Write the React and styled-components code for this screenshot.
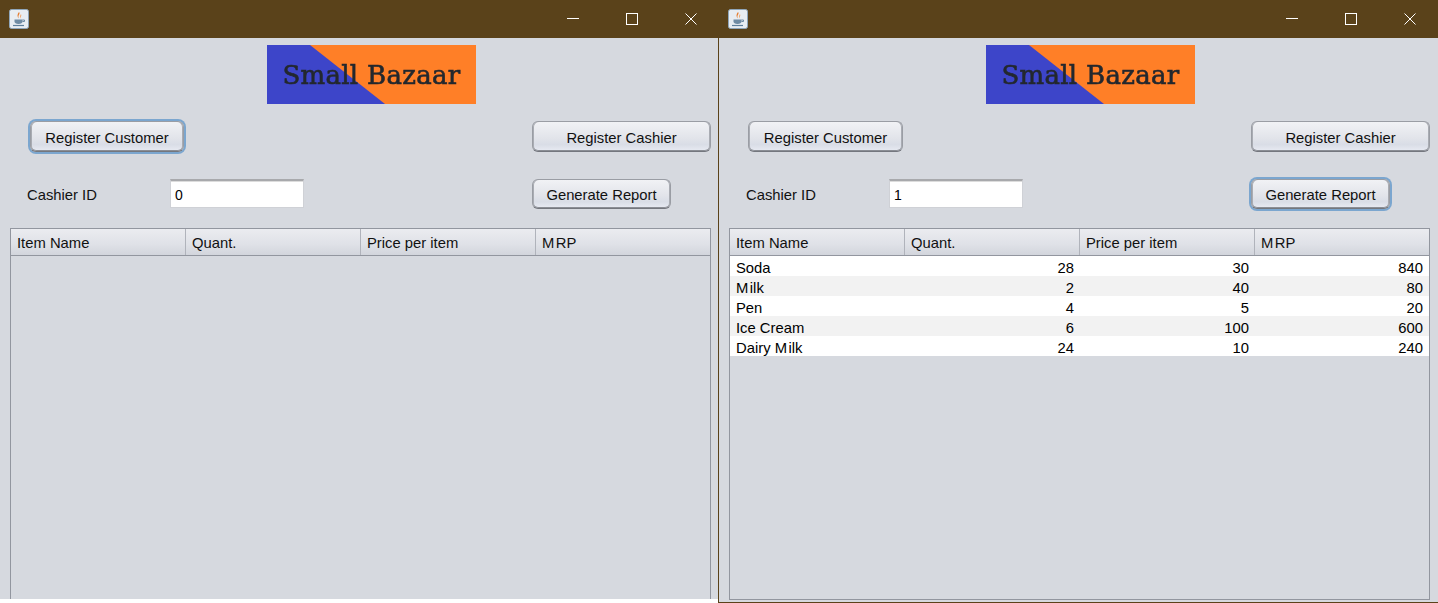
import React from 'react';
import styled, { createGlobalStyle } from 'styled-components';

const Global = createGlobalStyle`
  html, body { margin: 0; padding: 0; background: #fff; }
  body { width: 1438px; height: 603px; overflow: hidden; font-family: "Liberation Sans", Arial, sans-serif; }
`;
const Desktop = styled.div`display: flex; align-items: flex-start; width: 1438px; height: 603px;`;
const Win = styled.section`
  box-sizing: border-box; flex: none; overflow: hidden; background: #d6d9df;
  width: ${p => p.$w}px; height: ${p => p.$h}px;
  ${p => p.$framed ? 'border-left: 1px solid #5a421a; border-bottom: 1px solid #5a421a;' : ''}
`;
const Body = styled.div`width: 718px;`;
const TitleBar = styled.header`
  height: 38px; background: #5a421a; display: flex; align-items: center; box-sizing: border-box;
  padding: 0 ${p => p.$framed ? 22 : 21}px 0 9px;
  margin-right: ${p => p.$framed ? '-1px' : '0'};
`;
const AppIcon = styled.svg`width: 20px; height: 20px; flex: none; margin-top: -1px;`;
const Controls = styled.div`margin-left: auto; display: flex; align-items: center; gap: 47px;`;
const Ctl = styled.svg`width: 12px; height: 12px; display: block; fill: none; stroke: #fff; stroke-width: 1;`;
const LogoRow = styled.div`padding: 7px 0 0 267px;`;
const Logo = styled.div`
  position: relative; width: 209px; height: 59px; background: #ff7f27; overflow: hidden;
  display: flex; align-items: center; justify-content: center;
  &::before { content: ''; position: absolute; inset: 0; background: #3d45c9; clip-path: polygon(0 0, 43px 0, 118px 59px, 0 59px); }
`;
const LogoText = styled.span`
  position: relative; font-family: "DejaVu Serif", serif; font-size: 26px; color: #23282e; white-space: nowrap; letter-spacing: 0.3px;
  -webkit-text-stroke: 0.6px #23282e; filter: blur(0.3px);
`;
const BtnRow = styled.div`display: flex; justify-content: space-between; padding: 17px 7px 0 ${p => p.$left}px;`;
const IdRow = styled.div`display: flex; align-items: flex-start; padding: 27px 47px 0 27px;`;
const Btn = styled.button`
  box-sizing: border-box; width: ${p => p.$w}px; height: ${p => p.$h || 31}px; padding: 2px 0 0; border-radius: 6px;
  border: 1px solid #9a9da4; border-bottom-color: #74777e;
  background: linear-gradient(#f1f2f5 0%, #e2e4ea 55%, #d9dde6 78%, #e8ebf3 100%);
  font: 14.8px "Liberation Sans", Arial, sans-serif; color: #111;
  box-shadow: ${p => p.$focus ? '0 0 0 2px #7ba6cf,' : ''} inset 1px 0 #a9acb3, inset -1px 0 #a9acb3, inset 0 -1px #8b8e95;
`;
const Label = styled.div`width: 143px; height: 30px; line-height: 32px; font-size: 14.8px; color: #111;`;
const Field = styled.div`
  box-sizing: border-box; width: 134px; height: 29px; line-height: 29px; padding-left: 4px; background: #fff; font-size: 14px; color: #000;
  border: 1px solid #cfd1d6; border-top: 2px solid #a8a9ac; box-shadow: inset 0 1px #dcdcdc;
`;
const Spacer = styled.div`margin-left: auto;`;
const Table = styled.div`
  box-sizing: border-box; margin: 19px 0 0 10px; width: 701px; height: 372px; border: 1px solid #92969f;
`;
const HeadRow = styled.div`
  display: grid; grid-template-columns: 175px 175px 175px 174px; height: 26px;
  border-bottom: 1px solid #92969f; background: linear-gradient(#ebecf0 0%, #dfe1e7 60%, #d2d5dc 100%);
`;
const HeadCell = styled.div`
  box-sizing: border-box; height: 26px; padding: 1px 0 0 6px; line-height: 27px; font-size: 14.8px; color: #111;
  border-right: 1px solid #b0b3bb;
  &:last-child { border-right: 0; }
`;
const Row = styled.div`
  display: grid; grid-template-columns: 175px 175px 175px 174px; height: 20px; background: ${p => p.$odd ? '#f2f2f2' : '#fff'};
`;
const Cell = styled.div`
  box-sizing: border-box; height: 20px; padding: 0 6px; line-height: 24px; font-size: 14.8px; color: #000; text-align: ${p => p.$num ? 'right' : 'left'};
`;
const Gap = styled.span`margin-right: 1.5px;`;

const JavaIcon = () => (
  <AppIcon viewBox="0 0 20 20">
    <rect x="0.5" y="0.5" width="19" height="19" rx="2" fill="#e8edf2" stroke="#8fa6bb" />
    <path d="M10 3c2 2-2 3 0 6.5C8 8 8 5 10 3z" fill="#e77b2b" />
    <path d="M12 5c1 2-1 3 0 4.500C11 9 10.500 7 12 5z" fill="#f0a060" />
    <path d="M5.500 10.500h8v2c0 1.500-1.500 2.500-4 2.500s-4-1-4-2.500z" fill="#6f8ba3" />
    <path d="M13.500 11h2v1.500h-2" fill="none" stroke="#6f8ba3" />
    <path d="M4 16.500h11" stroke="#5d7f9b" strokeWidth="1.200" />
  </AppIcon>
);

const rows = [
  [['Soda'], 28, 30, 840],
  [['M', 'ilk'], 2, 40, 80],
  [['Pen'], 4, 5, 20],
  [['Ice Cream'], 6, 100, 600],
  [['Dairy M', 'ilk'], 24, 10, 240],
];

const Window = ({ w, h, framed, id, focus, data }) => (
  <Win $w={w} $h={h} $framed={framed}>
    <Body>
      <TitleBar $framed={framed}>
        <JavaIcon />
        <Controls>
          <Ctl viewBox="0 0 12 12"><path d="M0 5.500h12" /></Ctl>
          <Ctl viewBox="0 0 12 12"><rect x="0.500" y="0.500" width="11" height="11" /></Ctl>
          <Ctl viewBox="0 0 12 12"><path d="M0.500 0.500l11 11M11.500 0.500l-11 11" /></Ctl>
        </Controls>
      </TitleBar>
      <LogoRow><Logo><LogoText>Small Bazaar</LogoText></Logo></LogoRow>
      <BtnRow $left={framed ? 29 : 30}>
        <Btn $w={framed ? 155 : 154} $focus={focus === 'customer'}>Register Customer</Btn>
        <Btn $w={179}>Register Cashier</Btn>
      </BtnRow>
      <IdRow>
        <Label>Cashier ID</Label>
        <Field>{id}</Field>
        <Spacer><Btn $w={139} $h={30} $focus={focus === 'report'}>Generate Report</Btn></Spacer>
      </IdRow>
      <Table>
        <HeadRow>
          <HeadCell>Item Name</HeadCell>
          <HeadCell>Quant.</HeadCell>
          <HeadCell>Price per item</HeadCell>
          <HeadCell>M<Gap />RP</HeadCell>
        </HeadRow>
        {data.map(([name, q, p, m], i) => (
          <Row key={i} $odd={i % 2 === 1}>
            <Cell>{name.length > 1 ? <>{name[0]}<Gap />{name[1]}</> : name[0]}</Cell>
            <Cell $num>{q}</Cell>
            <Cell $num>{p}</Cell>
            <Cell $num>{m}</Cell>
          </Row>
        ))}
      </Table>
    </Body>
  </Win>
);

export default function App() {
  return (
    <>
      <Global />
      <Desktop>
        <Window w={718} h={599} id="0" focus="customer" data={[]} />
        <Window w={720} h={603} framed id="1" focus="report" data={rows} />
      </Desktop>
    </>
  );
}
